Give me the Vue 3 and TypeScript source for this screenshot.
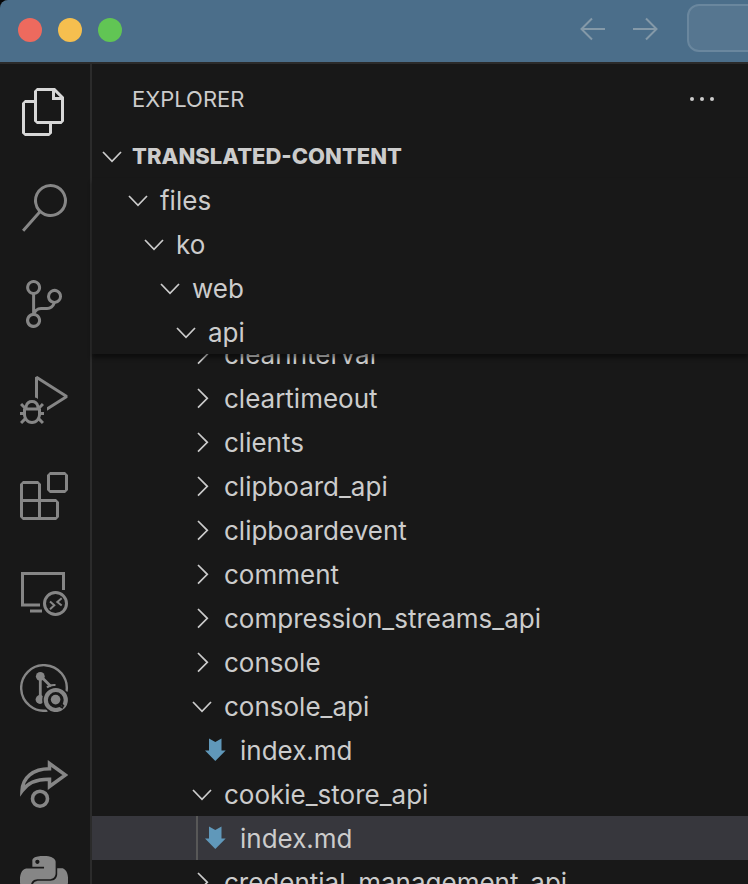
<script setup lang="ts">
import { ref } from 'vue'

interface TreeEntry {
  name: string
  level: number
  kind: 'open' | 'closed' | 'file'
}

const activities = [
  'Explorer',
  'Search',
  'Source Control',
  'Run and Debug',
  'Extensions',
  'Remote Explorer',
  'GitLens Inspect',
  'Live Share',
  'Python',
]
const activeView = ref(0)

const pinned: TreeEntry[] = [
  { name: 'files', level: 0, kind: 'open' },
  { name: 'ko', level: 1, kind: 'open' },
  { name: 'web', level: 2, kind: 'open' },
  { name: 'api', level: 3, kind: 'open' },
]

const entries: TreeEntry[] = [
  { name: 'clearinterval', level: 4, kind: 'closed' },
  { name: 'cleartimeout', level: 4, kind: 'closed' },
  { name: 'clients', level: 4, kind: 'closed' },
  { name: 'clipboard_api', level: 4, kind: 'closed' },
  { name: 'clipboardevent', level: 4, kind: 'closed' },
  { name: 'comment', level: 4, kind: 'closed' },
  { name: 'compression_streams_api', level: 4, kind: 'closed' },
  { name: 'console', level: 4, kind: 'closed' },
  { name: 'console_api', level: 4, kind: 'open' },
  { name: 'index.md', level: 5, kind: 'file' },
  { name: 'cookie_store_api', level: 4, kind: 'open' },
  { name: 'index.md', level: 5, kind: 'file' },
  { name: 'credential_management_api', level: 4, kind: 'closed' },
]
const selected = ref(11)
</script>

<template>
  <div class="window">
    <header class="titlebar">
      <div class="lights">
        <button class="light close" aria-label="Close"></button>
        <button class="light minimize" aria-label="Minimize"></button>
        <button class="light zoom" aria-label="Zoom"></button>
      </div>
      <div class="history">
        <button class="arrow" aria-label="Go back">
          <svg viewBox="0 0 32 32"><path d="M28 16H5M15 5.500L4.500 16L15 26.500" /></svg>
        </button>
        <button class="arrow" aria-label="Go forward">
          <svg viewBox="0 0 32 32"><path d="M4 16h23M17 5.500L27.500 16L17 26.500" /></svg>
        </button>
      </div>
      <button class="command" aria-label="Search files"></button>
    </header>

    <nav class="activity" aria-label="Views">
      <button
        v-for="(label, i) in activities"
        :key="label"
        class="view"
        :class="{ active: i === activeView }"
        :aria-label="label"
        @click="activeView = i"
      >
        <svg v-if="i === 0" viewBox="0 0 24 24"><path d="M17.5 0h-9L7 1.5V6H2.5L1 7.5v15.07L2.5 24h12.07L16 22.57V18h4.7l1.3-1.43V4.5L17.5 0zm0 2.12l2.38 2.38H17.5V2.12zm-3 20.38h-12v-15H7v9.07L8.5 18h6v4.5zm6-6h-12v-15H16V6h4.5v10.5z" /></svg>
        <svg v-else-if="i === 1" viewBox="0 0 24 24"><path d="M15.25 0a8.25 8.25 0 0 0-6.18 13.72L1 22.88l1.12 1 8.05-9.12A8.251 8.251 0 1 0 15.25.01V0zm0 15a6.75 6.75 0 1 1 0-13.5 6.75 6.75 0 0 1 0 13.5z" /></svg>
        <svg v-else-if="i === 2" viewBox="0 0 24 24"><path d="M21.007 8.222A3.738 3.738 0 0 0 15.045 5.2a3.737 3.737 0 0 0 1.156 6.583 2.988 2.988 0 0 1-2.668 1.67h-2.99a4.456 4.456 0 0 0-2.989 1.165V7.4a3.737 3.737 0 1 0-1.494 0v9.117a3.776 3.776 0 1 0 1.816.099 2.99 2.99 0 0 1 2.668-1.667h2.99a4.484 4.484 0 0 0 4.223-3.039 3.736 3.736 0 0 0 3.25-3.687zM4.565 3.738a2.242 2.242 0 1 1 4.484 0 2.242 2.242 0 0 1-4.484 0zm4.484 16.441a2.242 2.242 0 1 1-4.484 0 2.242 2.242 0 0 1 4.484 0zm8.221-9.715a2.242 2.242 0 1 1 0-4.485 2.242 2.242 0 0 1 0 4.485z" /></svg>
        <svg v-else-if="i === 3" viewBox="0 0 24 24"><path d="M10.94 13.5l-1.32 1.32a3.73 3.73 0 0 0-7.24 0L1.06 13.5 0 14.56l1.72 1.72-.22.22V18H0v1.5h1.5v.08c.077.489.214.966.41 1.42L0 22.94 1.06 24l1.65-1.65A4.308 4.308 0 0 0 6 24a4.31 4.31 0 0 0 3.29-1.65L10.94 24 12 22.94 10.09 21c.198-.464.336-.951.41-1.45v-.1H12V18h-1.5v-1.5l-.22-.22L12 14.56l-1.06-1.06zM6 13.5a2.25 2.25 0 0 1 2.25 2.25h-4.5A2.25 2.25 0 0 1 6 13.5zm3 6a3.33 3.33 0 0 1-3 3 3.33 3.33 0 0 1-3-3v-2.250h6v2.250zm14.760-9.900v1.260L13.500 17.370V15.600l8.500-5.370L9 2v9.460a5.070 5.070 0 0 0-1.500-.720V.630L8.640 0l15.120 9.600z" /></svg>
        <svg v-else-if="i === 4" viewBox="0 0 24 24"><path d="M13.5 1.5L15 0h7.5L24 1.5V9l-1.5 1.5H15L13.5 9V1.5zm1.5 0V9h7.5V1.5H15zM0 15V6l1.5-1.5H9L10.5 6v7.5H18l1.5 1.5v7.5L18 24H1.5L0 22.500V15zm9-1.500V6H1.500v7.500H9zM9 15H1.500v7.500H9V15zm1.500 7.500H18V15h-7.500v7.500z" /></svg>
        <svg v-else-if="i === 5" viewBox="0 0 48 48" class="line">
          <path d="M43.500 22V5.500H2.500V37H20M10 43H22" />
          <circle cx="35.500" cy="35.500" r="11" />
          <path d="M30 33.500L34.300 37.300L30 41.200M41.700 30.300L37.300 34L41.700 37.600" stroke-width="2" />
        </svg>
        <svg v-else-if="i === 6" viewBox="0 0 48 48">
          <path d="M46.500 27.500A22.800 22.800 0 1 0 27.500 46.500" fill="none" stroke="currentColor" stroke-width="2.400" />
          <circle cx="20.300" cy="12.300" r="4.400" />
          <circle cx="20" cy="35.500" r="4.400" />
          <path d="M20.300 12V36M21 12.500L31 22.500" fill="none" stroke="currentColor" stroke-width="2.800" />
          <path d="M27 23.500Q30 20.500 35.500 21" fill="none" stroke="currentColor" stroke-width="2" />
          <circle cx="35.800" cy="36" r="13.600" class="gap" />
          <circle cx="35.800" cy="36" r="10" fill="none" stroke="currentColor" stroke-width="4.200" />
          <circle cx="35.600" cy="35.600" r="4.800" />
          <path d="M38.500 41.500L43 44M41 39.500L43.800 42.500" class="notch" />
        </svg>
        <svg v-else-if="i === 7" viewBox="0 0 48 48" class="line">
          <path d="M29.500 3.500L45.500 15L29.500 26.500V19.300C17 19 8 22.500 2 31C2.500 17.500 13 8.800 29.500 8.800Z" stroke-width="3.500" />
          <circle cx="20" cy="38.700" r="7.500" stroke-width="3.600" />
        </svg>
        <svg v-else viewBox="0 0 24 24"><path d="M14.25.18l.9.2.73.26.59.3.45.32.34.34.25.34.16.33.1.3.04.26.02.2-.01.13V8.5l-.05.63-.13.55-.21.46-.26.38-.3.31-.33.25-.35.19-.35.14-.33.1-.3.07-.26.04-.21.02H8.77l-.69.05-.59.14-.5.22-.41.27-.33.32-.27.35-.2.36-.15.37-.1.35-.07.32-.04.27-.02.21v3.06H3.17l-.21-.03-.28-.07-.32-.12-.35-.18-.36-.26-.36-.36-.35-.46-.32-.59-.28-.73-.21-.88-.14-1.05-.05-1.23.06-1.22.16-1.04.24-.87.32-.71.36-.57.4-.44.42-.33.42-.24.4-.16.36-.1.32-.05.24-.01h.16l.06.01h8.16v-.83H6.18l-.01-2.75-.02-.37.05-.34.11-.31.17-.28.25-.26.31-.23.38-.2.44-.18.51-.15.58-.12.64-.1.71-.06.77-.04.84-.02 1.27.05zm-6.3 1.98l-.23.33-.08.41.08.41.23.34.33.22.41.09.41-.09.33-.22.23-.34.08-.41-.08-.41-.23-.33-.33-.22-.41-.09-.41.09zm13.09 3.95l.28.06.32.12.35.18.36.27.36.35.35.47.32.59.28.73.21.88.14 1.04.05 1.23-.06 1.23-.16 1.04-.24.86-.32.71-.36.57-.4.45-.42.33-.42.24-.4.16-.36.09-.32.05-.24.02-.16-.01h-8.22v.82h5.84l.01 2.76.02.36-.05.34-.11.31-.17.29-.25.25-.31.24-.38.2-.44.17-.51.15-.58.13-.64.09-.71.07-.77.04-.84.01-1.27-.04-1.07-.14-.9-.2-.73-.25-.59-.3-.45-.33-.34-.34-.25-.34-.16-.33-.1-.3-.04-.25-.02-.2.01-.13v-5.34l.05-.64.13-.54.21-.46.26-.38.3-.32.33-.24.35-.2.35-.14.33-.1.3-.06.26-.04.21-.02.13-.01h5.84l.69-.05.59-.14.5-.21.41-.28.33-.32.27-.35.2-.36.15-.36.1-.35.07-.32.04-.28.02-.21V6.07h2.09l.14.01z" /></svg>
      </button>
    </nav>

    <aside class="sidebar">
      <div class="heading">
        <h1>EXPLORER</h1>
        <button class="more" aria-label="Views and more actions">
          <svg viewBox="0 0 32 32"><circle cx="6" cy="16" r="2" /><circle cx="16" cy="16" r="2" /><circle cx="26" cy="16" r="2" /></svg>
        </button>
      </div>
      <button class="root">
        <svg class="chevron" viewBox="0 0 32 32"><path d="M7 12L16 21.300L25 12" /></svg>
        <span>TRANSLATED-CONTENT</span>
      </button>

      <ul class="pinned">
        <li v-for="item in pinned" :key="item.name">
          <button class="row" :class="'level-' + item.level">
            <svg class="chevron" viewBox="0 0 32 32"><path d="M7 12L16 21.300L25 12" /></svg>
            <span>{{ item.name }}</span>
          </button>
        </li>
      </ul>

      <div class="scroller">
        <ul class="entries">
          <li v-for="(item, i) in entries" :key="i">
            <button
              class="row"
              :class="['level-' + item.level, { selected: i === selected }]"
              @click="selected = i"
            >
              <svg v-if="item.kind === 'open'" class="chevron" viewBox="0 0 32 32"><path d="M7 12L16 21.300L25 12" /></svg>
              <svg v-else-if="item.kind === 'closed'" class="chevron" viewBox="0 0 32 32"><path d="M12 7L21.300 16.300L12 25.600" /></svg>
              <svg v-else class="markdown" viewBox="0 0 32 32"><path d="M7 4.500L13.300 8L19.500 4.500V16.500H23.700L13.300 27L3 16.500H7Z" /></svg>
              <span>{{ item.name }}</span>
            </button>
          </li>
        </ul>
      </div>
    </aside>
  </div>
</template>

<style>
body {
  margin: 0;
  background: #050607;
}
</style>

<style scoped>
.window {
  display: grid;
  grid-template: 64px minmax(0, 1fr) / 92px minmax(0, 1fr);
  height: 100vh;
  overflow: hidden;
  border-top-left-radius: 8px;
  background: #181818;
  color: #cccccc;
  font-family: Inter, "Liberation Sans", sans-serif;
  font-size: 26px;
}

button {
  margin: 0;
  padding: 0;
  border: 0;
  background: none;
  color: inherit;
  font: inherit;
  text-align: left;
}

svg {
  display: block;
  flex: none;
}

.titlebar {
  grid-column: 1 / -1;
  display: flex;
  align-items: center;
  padding: 0 0 2px 18px;
  box-sizing: border-box;
  border-bottom: 2px solid #2b2b2b;
  background: #4b6e8a;
}

.lights {
  display: flex;
  gap: 16px;
  margin-right: auto;
}

.light {
  width: 24px;
  height: 24px;
  border-radius: 50%;
}

.close {
  background: #ed6a5e;
}

.minimize {
  background: #f5bf4f;
}

.zoom {
  background: #61c554;
}

.history {
  display: flex;
  gap: 20px;
  margin-right: 26px;
}

.arrow svg {
  width: 32px;
  height: 32px;
  margin-bottom: 2px;
  fill: none;
  stroke: #8499a8;
  stroke-width: 2;
}

.command {
  width: 84px;
  height: 48px;
  margin: 0 -23px 4px 0;
  box-sizing: border-box;
  border: 2px solid #6a879e;
  border-radius: 12px;
  background: #567690;
}

.activity {
  display: flex;
  flex-direction: column;
  overflow: hidden;
  border-right: 2px solid #2b2b2b;
  color: #868686;
}

.view {
  display: flex;
  flex: none;
  align-items: center;
  height: 96px;
  padding-left: 20px;
}

.view svg {
  width: 48px;
  height: 48px;
  fill: currentColor;
}

.view .line {
  fill: none;
  stroke: currentColor;
  stroke-width: 3;
}

.view .gap {
  fill: #181818;
}

.view .notch {
  fill: none;
  stroke: #181818;
  stroke-width: 2;
}

.active {
  color: #d7d7d7;
}

.sidebar {
  display: flex;
  flex-direction: column;
  min-height: 0;
}

.heading {
  display: flex;
  align-items: center;
  justify-content: space-between;
  height: 70px;
  padding: 0 30px 0 40px;
}

h1 {
  margin: 0;
  font-size: 22px;
  font-weight: 400;
}

.more svg {
  width: 32px;
  height: 32px;
  fill: #cccccc;
}

.root {
  display: flex;
  align-items: center;
  gap: 4px;
  height: 44px;
  padding-left: 4px;
  font-size: 22px;
  font-weight: 800;
}

.chevron,
.markdown {
  width: 32px;
  height: 32px;
}

.chevron {
  fill: none;
  stroke: #cccccc;
  stroke-width: 1.7;
}

.markdown {
  fill: #6098ba;
}

ul {
  margin: 0;
  padding: 0;
  list-style: none;
}

.pinned {
  position: relative;
  z-index: 1;
  background: #181818;
  box-shadow: 0 4px 4px rgba(0, 0, 0, 0.45);
}

.scroller {
  flex: 1;
  min-height: 0;
  overflow: hidden;
}

/* The list rests half a row into its first entry. */
.entries {
  margin-top: -22px;
}

.row {
  position: relative;
  display: flex;
  align-items: center;
  gap: 6px;
  width: 100%;
  height: 44px;
  white-space: nowrap;
}

.level-0 {
  padding-left: 30px;
}

.level-1 {
  padding-left: 46px;
}

.level-2 {
  padding-left: 62px;
}

.level-3 {
  padding-left: 78px;
}

.level-4 {
  padding-left: 94px;
}

.level-5 {
  padding-left: 110px;
}

.selected {
  background: #37373d;
}

.selected::before {
  content: "";
  position: absolute;
  top: 0;
  bottom: 0;
  left: 104px;
  width: 2px;
  background: #585858;
}
</style>
